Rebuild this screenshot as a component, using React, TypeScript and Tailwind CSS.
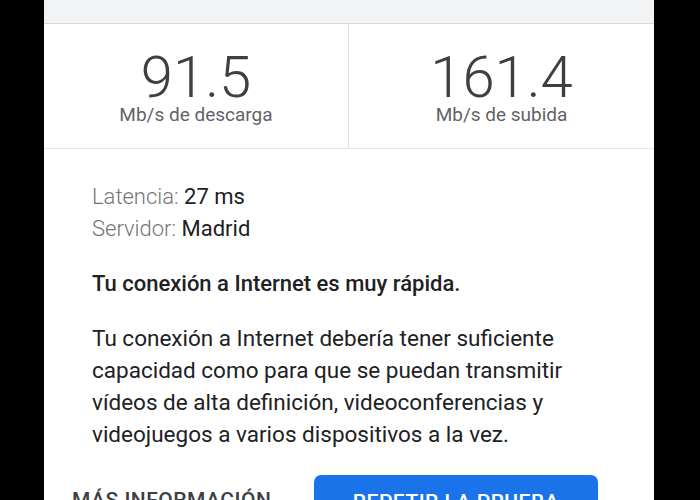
export default function App() {
  const stats = [
    { value: "91.5", label: "Mb/s de descarga" },
    { value: "161.4", label: "Mb/s de subida" },
  ];

  return (
    <div className="w-[700px] h-[500px] overflow-hidden bg-black pl-[44px] font-['Roboto',sans-serif]">
      <div className="w-[610px] h-full bg-white">
        {/* top strip */}
        <div className="h-[24px] bg-[#f1f3f4] border-b border-[#d6d8db]" />

        {/* speed results */}
        <div className="grid grid-cols-[305px_1fr] border-b border-[#e3e5e8]">
          {stats.map((s, i) => (
            <div
              key={s.label}
              className={`h-[124px] flex flex-col items-center pt-[27px] ${i === 0 ? "border-r border-[#dcdee1]" : ""}`}
            >
              <div className="text-[58px] leading-[52px] font-light text-[#3c4043]">{s.value}</div>
              <div className="text-[19px] leading-[24px] text-[#5f6368]">{s.label}</div>
            </div>
          ))}
        </div>

        {/* details */}
        <div className="px-[48px] pt-[32px] text-[22px] leading-[32px]">
          <div>
            <span className="font-light text-[#757575]">Latencia: </span>
            <span className="text-[#202124]">27 ms</span>
          </div>
          <div>
            <span className="font-light text-[#757575]">Servidor: </span>
            <span className="text-[#202124]">Madrid</span>
          </div>

          <p className="mt-[23px] font-medium text-[#202124]">Tu conexión a Internet es muy rápida.</p>

          <p className="mt-[22px] text-[22.5px] text-[#202124]">
            Tu conexión a Internet debería tener suficiente
            <br />
            capacidad como para que se puedan transmitir
            <br />
            vídeos de alta definición, videoconferencias y
            <br />
            videojuegos a varios dispositivos a la vez.
          </p>
        </div>

        {/* actions */}
        <div className="flex items-start mt-[25px] pl-[28px]">
          <button className="w-[242px] h-[52px] flex items-center text-[21px] font-medium tracking-[0.5px] text-[#3c4043] uppercase">
            Más información
          </button>
          <button className="w-[284px] h-[56px] rounded-[7px] bg-[#1a73e8] flex items-center justify-center text-[21px] font-medium tracking-[0.5px] text-white uppercase">
            Repetir la prueba
          </button>
        </div>
      </div>
    </div>
  );
}
